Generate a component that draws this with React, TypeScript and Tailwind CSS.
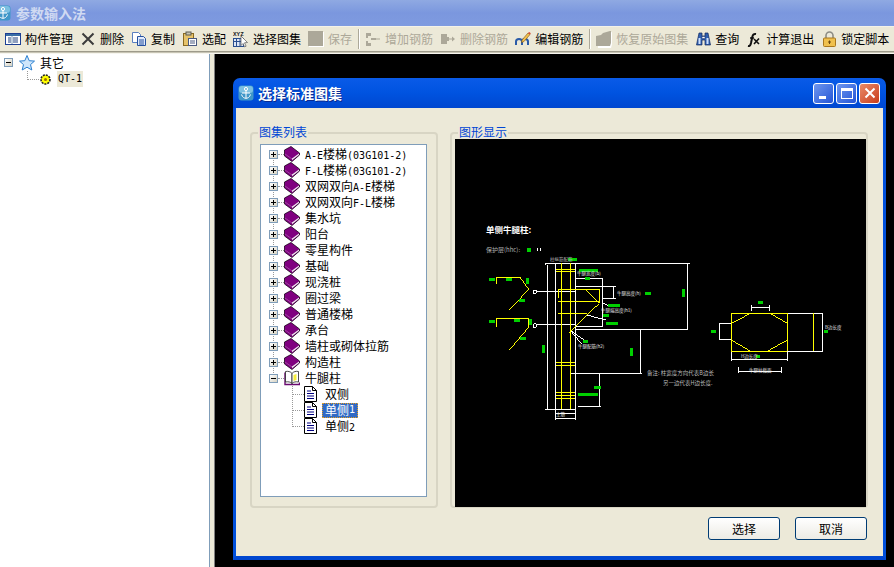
import React from "react";

const FONT = { fontFamily: '"Noto Sans CJK SC", sans-serif' };

function AppGlyph({ size = 16 }: { size?: number }) {
  return (
    <svg width={size} height={size} viewBox="0 0 16 16">
      <rect x="0.5" y="0.5" width="15" height="15" rx="3" fill="#3f97c9" />
      <rect x="1" y="1" width="14" height="7" rx="3" fill="#7cc0e2" />
      <circle cx="8" cy="4" r="1.6" fill="none" stroke="#fff" />
      <path d="M8 5.500V13M4 8h8M3.500 9.500c1 3 3 3.800 4.500 3.800s3.500-.8 4.500-3.800" fill="none" stroke="#fff" />
    </svg>
  );
}

function IconManage() {
  return (
    <svg width="16" height="16" viewBox="0 0 16 16">
      <rect x="0.5" y="2.500" width="15" height="11" fill="#fff" stroke="#1c3f94" />
      <rect x="1" y="3" width="14" height="2" fill="#3a6ea5" />
      <path d="M3 7h3M3 9h3M3 11h3M8 7h5M8 9h5M8 11h5" stroke="#20407f" />
      <path d="M7 5v8" stroke="#7f9db9" />
    </svg>
  );
}
function IconDelete() {
  return (
    <svg width="16" height="16" viewBox="0 0 16 16">
      <path d="M2.500 2.500l11 11M13.500 2.500l-11 11" stroke="#3c3c3c" strokeWidth="2" />
    </svg>
  );
}
function IconCopy() {
  return (
    <svg width="16" height="16" viewBox="0 0 16 16">
      <path d="M1.500 1.500h6l2 2v8h-8z" fill="#fff" stroke="#5a7fc0" />
      <path d="M6.500 5.500h6l2 2v7h-8z" fill="#dfe9fb" stroke="#24509f" />
      <path d="M8 9h5M8 11h5M8 13h5" stroke="#24509f" />
    </svg>
  );
}
function IconPaste() {
  return (
    <svg width="16" height="16" viewBox="0 0 16 16">
      <rect x="1.500" y="2.500" width="10" height="12" fill="#e6c36a" stroke="#8a6a20" />
      <rect x="4" y="1" width="5" height="3" fill="#c9c5b2" stroke="#5c5c50" />
      <rect x="6.500" y="7.500" width="8" height="7" fill="#fff" stroke="#4a5a80" />
      <path d="M8 10h5M8 12h5" stroke="#4a5a80" />
    </svg>
  );
}
function IconAtlas() {
  return (
    <svg width="16" height="17" viewBox="0 0 16 17">
      <text x="0" y="5" fontSize="6" fontWeight="700" fill="#222" fontFamily="Liberation Mono, monospace">XYZ</text>
      <rect x="0.500" y="7.500" width="10" height="8" fill="#dce6f5" stroke="#2a4f8f" />
      <path d="M0.500 10.500h10M3.500 8v8M7 8v8" stroke="#2a4f8f" />
      <path d="M8 5l6.500 6.500-3 .3 1.600 3.400-1.500.7-1.600-3.400L8 14.500z" fill="#fff" stroke="#555" strokeWidth="0.7" />
    </svg>
  );
}
function IconSaveOff() {
  return (
    <svg width="16" height="16" viewBox="0 0 16 16">
      <rect x="1" y="1" width="15" height="15" fill="#fff" />
      <rect x="0" y="0" width="15" height="15" fill="#aca899" />
    </svg>
  );
}
function IconRebarOff() {
  return (
    <svg width="16" height="16" viewBox="0 0 16 16">
      <path d="M1 2h5v3H3v2H1zM1 10h2v2h3v3H1zM6 7h5v2H6z" fill="#aca899" />
      <path d="M11 7.500h4v1h-4z" fill="#aca899" />
    </svg>
  );
}
function IconRebarDelOff() {
  return (
    <svg width="16" height="16" viewBox="0 0 16 16">
      <path d="M1 3h6v3h2v4H7v3H1zM9 7.500h4v1H9z" fill="#aca899" />
      <path d="M12 5.500l3 2.500-3 2.500z" fill="#aca899" />
    </svg>
  );
}
function IconEdit() {
  return (
    <svg width="16" height="16" viewBox="0 0 16 16">
      <path d="M1 14V10.500C1 8.500 2.500 8 4 8s3 .5 3 2.500V14M7 14v-3.500C7 8.800 8.500 8 10 8s3 .8 3 2.500V14" fill="none" stroke="#2a5ba8" strokeWidth="2" />
      <path d="M7 9l6-7 2 1.500-6 7-2.500 1z" fill="#f2c04c" stroke="#7a4f10" strokeWidth="0.6" />
      <path d="M13 2l2 1.500 .8-1.300-1.600-1.300z" fill="#d8452c" />
    </svg>
  );
}
function IconFolderOff() {
  return (
    <svg width="16" height="17" viewBox="0 0 16 17">
      <path d="M1 6l5-1 2-2 7-3v12l-1 4H1z" fill="#fff" transform="translate(1 1)" />
      <path d="M0 5l5-1 2-2 7-2h1v12l-1 3H0z" fill="#aca899" />
    </svg>
  );
}
function IconBinoculars() {
  return (
    <svg width="15" height="15" viewBox="0 0 15 15">
      <path d="M3 1h3v3h3V1h3l2.500 12H9V8H6v5H.5z" fill="#2f5fb0" stroke="#14295e" strokeWidth="0.7" />
      <path d="M2.500 6h2v6h-2zM10.500 6h2v6h-2z" fill="#cfe0fb" />
      <rect x="6" y="4.500" width="3" height="2" fill="#fff" stroke="#14295e" strokeWidth="0.5" />
    </svg>
  );
}
function IconFx() {
  return (
    <svg width="15" height="15" viewBox="0 0 15 15">
      <path d="M1 14c2 .5 2.500-1 3-3l1.300-6c.4-2 1.500-3.500 3.700-3" fill="none" stroke="#111" strokeWidth="2" />
      <path d="M3 6h4" stroke="#111" strokeWidth="1.500" />
      <path d="M7 7l5 5M12 6.500L7 12" stroke="#111" strokeWidth="1.600" />
    </svg>
  );
}
function IconLock() {
  return (
    <svg width="15" height="16" viewBox="0 0 15 16">
      <path d="M4 7V4.500a3.500 3.500 0 0 1 7 0V7" fill="none" stroke="#8d8d85" strokeWidth="1.600" />
      <rect x="1.500" y="7" width="12" height="8.500" rx="1" fill="#f0c14e" stroke="#a9781e" />
      <path d="M7.500 9.500v3.500M6 11h3" stroke="#6d4a10" />
    </svg>
  );
}

function Book() {
  return (
    <svg width="16" height="16" viewBox="0 0 16 16" className="shrink-0">
      <path d="M.5 4L7 .5l8.500 6.500v2L8 15.500.5 10z" fill="#800080" stroke="#1a001a" strokeWidth="0.8" />
      <path d="M8 12.600l7-5.200v1.400l-7 5.400z" fill="#f2f2f2" />
      <path d="M1 8l7 5" stroke="#b060b0" strokeWidth="0.7" />
    </svg>
  );
}
function OpenBook() {
  return (
    <svg width="16" height="16" viewBox="0 0 16 16" className="shrink-0">
      <path d="M1 2.500v12h14.500v-2" fill="none" stroke="#6a0a70" strokeWidth="1.400" />
      <path d="M1.500 1.500C4 1 6.500 1.500 8 3.500v10C6.500 11.800 4 11.500 1.500 12z" fill="#fff" stroke="#222" strokeWidth="0.8" />
      <path d="M8 3.500C9.500 1.500 12 1 14.500 1.500V12c-2.500-.5-5-.2-6.500 1.500z" fill="#fff" stroke="#222" strokeWidth="0.8" />
      <path d="M9.500 5l3-1v6l-3 1z" fill="#f5ee3c" />
    </svg>
  );
}
function Doc() {
  return (
    <svg width="13" height="16" viewBox="0 0 13 16" className="shrink-0">
      <path d="M.5 .5h8l4 4v11H.5z" fill="#fff" stroke="#000" />
      <path d="M8.500 .5v4h4" fill="none" stroke="#000" />
      <path d="M3 5h4M3 7.500h7M3 10h7M3 12.500h7" stroke="#000080" />
    </svg>
  );
}

function Expander({ open }: { open?: boolean }) {
  return (
    <span className="relative flex h-[9px] w-[9px] shrink-0 items-center justify-center border border-[#7f9db9] bg-gradient-to-br from-white to-[#d6d2c2]">
      <span className="h-px w-[5px] bg-black" />
      {!open && <span className="absolute h-[5px] w-px bg-black" />}
    </span>
  );
}

// half width latin next to 12px CJK, the way the old bitmap font sets it
function Mixed({ text }: { text: string }) {
  return (
    <>
      {text.split(/([A-Za-z0-9()\-]+)/).map((part, i) =>
        i % 2 ? (
          <span key={i} className="font-['DejaVu_Sans_Mono',monospace] text-[10px]">{part}</span>
        ) : (
          part
        )
      )}
    </>
  );
}

const tools = [
  { icon: <IconManage />, label: "构件管理" },
  { icon: <IconDelete />, label: "删除" },
  { icon: <IconCopy />, label: "复制" },
  { icon: <IconPaste />, label: "选配" },
  { icon: <IconAtlas />, label: "选择图集" },
  { icon: <IconSaveOff />, label: "保存", off: true },
  { sep: true },
  { icon: <IconRebarOff />, label: "增加钢筋", off: true },
  { icon: <IconRebarDelOff />, label: "删除钢筋", off: true },
  { icon: <IconEdit />, label: "编辑钢筋" },
  { sep: true },
  { icon: <IconFolderOff />, label: "恢复原始图集", off: true },
  { icon: <IconBinoculars />, label: "查询" },
  { icon: <IconFx />, label: "计算退出" },
  { icon: <IconLock />, label: "锁定脚本" },
];

function Toolbar() {
  return (
    <div className="flex h-[24px] items-center gap-[7px] bg-[#ece9d8] pl-[5px] text-[12px] leading-none">
      {tools.map((t, i) =>
        t.sep ? (
          <span key={i} className="ml-[-1px] mr-[-2px] h-[20px] w-[2px] shrink-0 border-l border-r border-l-[#aca899] border-r-white" />
        ) : (
          <span key={i} className={`flex shrink-0 items-center gap-[4px] whitespace-nowrap ${t.off ? "text-[#aca899]" : "text-black"}`}>
            <span className="flex h-[16px] w-[16px] items-center justify-center">{t.icon}</span>
            {t.label}
          </span>
        )
      )}
    </div>
  );
}

const atlas = [
  "A-E楼梯(03G101-2)",
  "F-L楼梯(03G101-2)",
  "双网双向A-E楼梯",
  "双网双向F-L楼梯",
  "集水坑",
  "阳台",
  "零星构件",
  "基础",
  "现浇桩",
  "圈过梁",
  "普通楼梯",
  "承台",
  "墙柱或砌体拉筋",
  "构造柱",
];

function AtlasTree() {
  return (
    <div className="relative h-[353px] w-[167px] border border-[#7f9db9] bg-white pt-px text-[12px] leading-none text-black">
      <span className="absolute left-[12px] top-[9px] h-[225px] border-l border-dotted border-[#999]" />
      <span className="absolute left-[31px] top-[241px] h-[41px] border-l border-dotted border-[#999]" />
      {atlas.map((name) => (
        <div key={name} className="flex h-[16px] items-center pl-[8px]">
          <Expander />
          <span className="w-[6px] border-t border-dotted border-[#999]" />
          <Book />
          <span className="ml-[5px] whitespace-nowrap"><Mixed text={name} /></span>
        </div>
      ))}
      <div className="flex h-[16px] items-center pl-[8px]">
        <Expander open />
        <span className="w-[6px] border-t border-dotted border-[#999]" />
        <OpenBook />
        <span className="ml-[5px]">牛腿柱</span>
      </div>
      {["双侧", "单侧1", "单侧2"].map((name) => (
        <div key={name} className="flex h-[16px] items-center pl-[31px]">
          <span className="w-[12px] border-t border-dotted border-[#999]" />
          <Doc />
          {name === "单侧1" ? (
            <span className="ml-[5px] flex h-[15px] items-center border border-dotted border-[#e8a020] bg-[#316ac5] px-[2px] text-white">
              <Mixed text={name} />
            </span>
          ) : (
            <span className="ml-[8px]"><Mixed text={name} /></span>
          )}
        </div>
      ))}
    </div>
  );
}

// drawing coordinates are taken at 3x so they stay easy to compare with the crop
const whiteA = [
  "M225 160H660", "M652 160V360", "M315 360H655", "M257 160V630", "M316 160V630", "M232 165V598", "M225 598H316",
  "M256 610H316", "M256 627H316", "M316 205H398V350", "M316 230H398", "M430 230V266", "M400 230H438", "M400 266H438",
  "M200 246H316", "M200 344H316", "M300 360L345 392", "M300 360L335 402", "M350 315L408 330", "M395 276L415 288",
  "M316 350H398", "M512 360V492", "M302 492H515", "M388 492V590", "M325 590H392", "M228 160V165",
];
const yellowA = [
  "M257 178H316", "M257 185H316", "M274 160V598", "M303 160V598", "M265 265V238H388V280", "M265 274H388",
  "M347 238L388 280", "M265 310H350", "M388 280L297 368", "M257 458H316", "M257 466H316", "M257 547H316", "M257 556H316",
  "M257 566H316", "M80 222V202H150L176 238L118 300", "M80 352V325H176V352L118 420",
];
const greenA: [number, number, number, number][] = [
  [58, 205, 18, 8], [108, 205, 18, 8], [168, 204, 9, 18], [148, 267, 16, 8], [58, 331, 18, 8], [132, 328, 18, 8],
  [178, 328, 8, 18], [150, 382, 17, 8], [216, 406, 8, 24], [295, 145, 26, 8], [328, 178, 56, 8], [346, 202, 14, 8],
  [636, 238, 10, 24], [525, 247, 18, 8], [414, 283, 36, 8], [400, 312, 16, 8], [408, 336, 36, 8], [338, 389, 16, 10],
  [480, 415, 9, 22], [372, 528, 20, 9], [325, 549, 58, 8], [170, 115, 13, 10],
];
const whiteB = [
  "M185 45V62", "M238 45V62", "M185 52H238", "M86 102H124", "M86 148H124", "M88 102V148", "M292 70H400", "M292 184H400",
  "M398 70V184", "M124 208H292", "M124 184V214", "M292 184V214", "M145 232V250", "M274 232V250", "M145 244H274",
];
const yellowB = [
  "M124 70H292V184H124Z", "M370 70V184", "M124 100L182 70", "M240 70L292 100", "M124 150L182 184", "M232 184L292 150",
];

function Drawing() {
  const lbl = { fill: "#e8e8e8", fontFamily: '"Noto Sans CJK SC", sans-serif' };
  return (
    <svg width="411" height="368" viewBox="455 139 411 368" className="block bg-black" shapeRendering="crispEdges">
      <g transform="translate(470 210) scale(0.3333)" fill="none" strokeWidth="3">
        {whiteA.map((d) => <path key={d} d={d} stroke="#fff" />)}
        {yellowA.map((d) => <path key={d} d={d} stroke="#ff0" />)}
        <g stroke="#fff" strokeWidth="3" fill="#000">
          <circle cx="195" cy="246" r="6" />
          <circle cx="195" cy="347" r="6" />
        </g>
        <g fill="#00d000" stroke="none">
          {greenA.map(([x, y, w, h]) => <rect key={`${x}-${y}`} x={x} y={y} width={w} height={h} />)}
        </g>
        <path d="M200 115h3v9h-3zM209 115h3v9h-3z" fill="#fff" stroke="none" />
      </g>
      <g transform="translate(690 290) scale(0.3333)" fill="none" strokeWidth="3">
        {whiteB.map((d) => <path key={d} d={d} stroke="#fff" />)}
        {yellowB.map((d) => <path key={d} d={d} stroke="#ff0" />)}
        <g fill="#00d000" stroke="none">
          <rect x="204" y="34" width="15" height="8" />
          <rect x="63" y="121" width="15" height="8" />
          <rect x="401" y="121" width="13" height="8" />
          <rect x="197" y="196" width="13" height="8" />
        </g>
      </g>
      <g {...lbl} shapeRendering="auto">
        <text x="486" y="233" fontSize="8.500" fontWeight="700" fill="#fff">单侧牛腿柱:</text>
        <text x="486" y="252" fontSize="6" fill="#b0b0b0">保护层(hhc):</text>
        <text x="550" y="261" fontSize="4.500" fill="#bbb">柱纵筋配筋</text>
        <text x="577" y="275" fontSize="4.500">牛腿宽度(b)</text>
        <text x="617" y="295" fontSize="4.500">牛腿高度(h)</text>
        <text x="601" y="312" fontSize="4.500">牛腿端高度(h1)</text>
        <text x="578" y="348" fontSize="4.500">牛腿配筋(h2)</text>
        <text x="556" y="416" fontSize="4.500">主筋</text>
        <text x="647" y="375" fontSize="5.500" fill="#bbb">备注: 柱宽度方向代表B边长</text>
        <text x="663" y="384.500" fontSize="5.500" fill="#bbb">另一边代表H边长度.</text>
        <text x="825" y="329" fontSize="4.500">B边长度</text>
        <text x="741" y="358" fontSize="4.500">H边长度</text>
        <text x="749" y="372" fontSize="4.500">牛腿柱截面</text>
      </g>
    </svg>
  );
}

function GroupBox({ title, className, children }: { title: string; className: string; children: React.ReactNode }) {
  return (
    <div className={`relative h-[376px] rounded-[4px] border-2 border-[#d8d5c4] ${className}`}>
      <span className="absolute left-[6px] top-[-9px] bg-[#ece9d8] px-px text-[12px] leading-[14px] text-[#0046d5]">{title}</span>
      {children}
    </div>
  );
}

function WinBtn({ children, red }: { children: React.ReactNode; red?: boolean }) {
  return (
    <span
      className={`flex h-[21px] w-[21px] items-center justify-center rounded-[3px] border border-white ${
        red ? "bg-gradient-to-br from-[#e88a68] to-[#c93a16]" : "bg-gradient-to-br from-[#6f96ee] to-[#2453d6]"
      }`}
    >
      {children}
    </span>
  );
}

function Button({ children }: { children: React.ReactNode }) {
  return (
    <button className="flex h-[23px] w-[72px] items-center justify-center rounded-[3px] border border-[#003c74] bg-gradient-to-b from-white to-[#ecebe4] text-[12px] leading-none text-black">
      {children}
    </button>
  );
}

function Dialog() {
  return (
    <div className="h-[482px] w-[653px]">
      <div className="flex h-[30px] items-center rounded-t-[7px] bg-gradient-to-b from-[#0a5be8] via-[#0053e0] to-[#0047d0] pl-[5px] pr-[6px]">
        <AppGlyph />
        <span className="ml-[4px] text-[14px] font-bold leading-none text-white [text-shadow:1px_1px_0_#0a2a90]">选择标准图集</span>
        <span className="ml-auto flex gap-[2px]">
          <WinBtn><span className="mr-[3px] mt-[9px] h-[3px] w-[7px] bg-white" /></WinBtn>
          <WinBtn><span className="h-[11px] w-[12px] border border-t-[3px] border-white" /></WinBtn>
          <WinBtn red>
            <svg width="12" height="12" viewBox="0 0 12 12"><path d="M1.500 1.500l9 9M10.500 1.500l-9 9" stroke="#fff" strokeWidth="2" /></svg>
          </WinBtn>
        </span>
      </div>
      <div className="h-[452px] border-x-[3px] border-b-[4px] border-x-[#0050dc] border-b-[#0047d0] bg-[#ece9d8] pl-[14px] pr-[15px] pt-[24px]">
        <div className="flex gap-[12px]">
          <GroupBox title="图集列表" className="w-[188px] pl-[8px] pt-[10px]">
            <AtlasTree />
          </GroupBox>
          <GroupBox title="图形显示" className="w-[418px] pl-[3px] pt-[5px]">
            <Drawing />
          </GroupBox>
        </div>
        <div className="mt-[9px] flex justify-end gap-[15px] pr-px">
          <Button>选择</Button>
          <Button>取消</Button>
        </div>
      </div>
    </div>
  );
}

export default function App() {
  return (
    <div className="flex h-[567px] w-[894px] flex-col overflow-hidden bg-[#ece9d8]" style={FONT}>
      <div className="flex h-[26px] items-center bg-gradient-to-b from-[#8fa9e2] via-[#7b97de] to-[#7f9be0]">
        <span className="ml-[-5px] flex"><AppGlyph /></span>
        <span className="ml-[5px] text-[14px] font-bold leading-none text-[#d0daf2]">参数输入法</span>
      </div>
      <div className="h-px bg-[#f4f2e8]" />
      <Toolbar />
      <div className="h-[3px] border-b border-t border-b-[#f7f6ef] border-t-[#9d9a8a] bg-[#c8c5b5]" />
      <div className="flex min-h-0 flex-1">
        <div className="w-[210px] border-r border-[#7f9db9] bg-white pl-[4px] text-[12px] leading-none text-black">
          <div className="flex h-[17px] items-center">
            <Expander open />
            <svg width="16" height="16" viewBox="0 0 16 16" className="ml-[6px]">
              <path d="M8 .5l2.200 5.200 5.300.4-4 3.500 1.300 5.400L8 12.200l-4.800 2.800 1.300-5.400-4-3.500 5.300-.4z" fill="#cfe6fb" stroke="#2a7fd0" />
            </svg>
            <span className="ml-[5px]">其它</span>
          </div>
          <div className="flex h-[16px] items-center pl-[23px]">
            <span className="mb-[8px] h-[9px] w-[12px] border-b border-l border-dotted border-[#999]" />
            <svg width="13" height="13" viewBox="0 0 13 13">
              <circle cx="6.500" cy="6.500" r="4.500" fill="#ff0" stroke="#222" strokeWidth="1.600" strokeDasharray="2 1" />
              <circle cx="6.500" cy="6.500" r="1.500" fill="#a07000" />
            </svg>
            <span className="ml-[5px] flex h-[16px] items-center bg-[#ece9d8] px-[1px]"><Mixed text="QT-1" /></span>
          </div>
        </div>
        <div className="w-[5px] border-r border-[#808080] bg-[#ece9d8]" />
        <div className="flex-1 bg-black pl-[18px] pt-[24px]">
          <Dialog />
        </div>
      </div>
    </div>
  );
}
